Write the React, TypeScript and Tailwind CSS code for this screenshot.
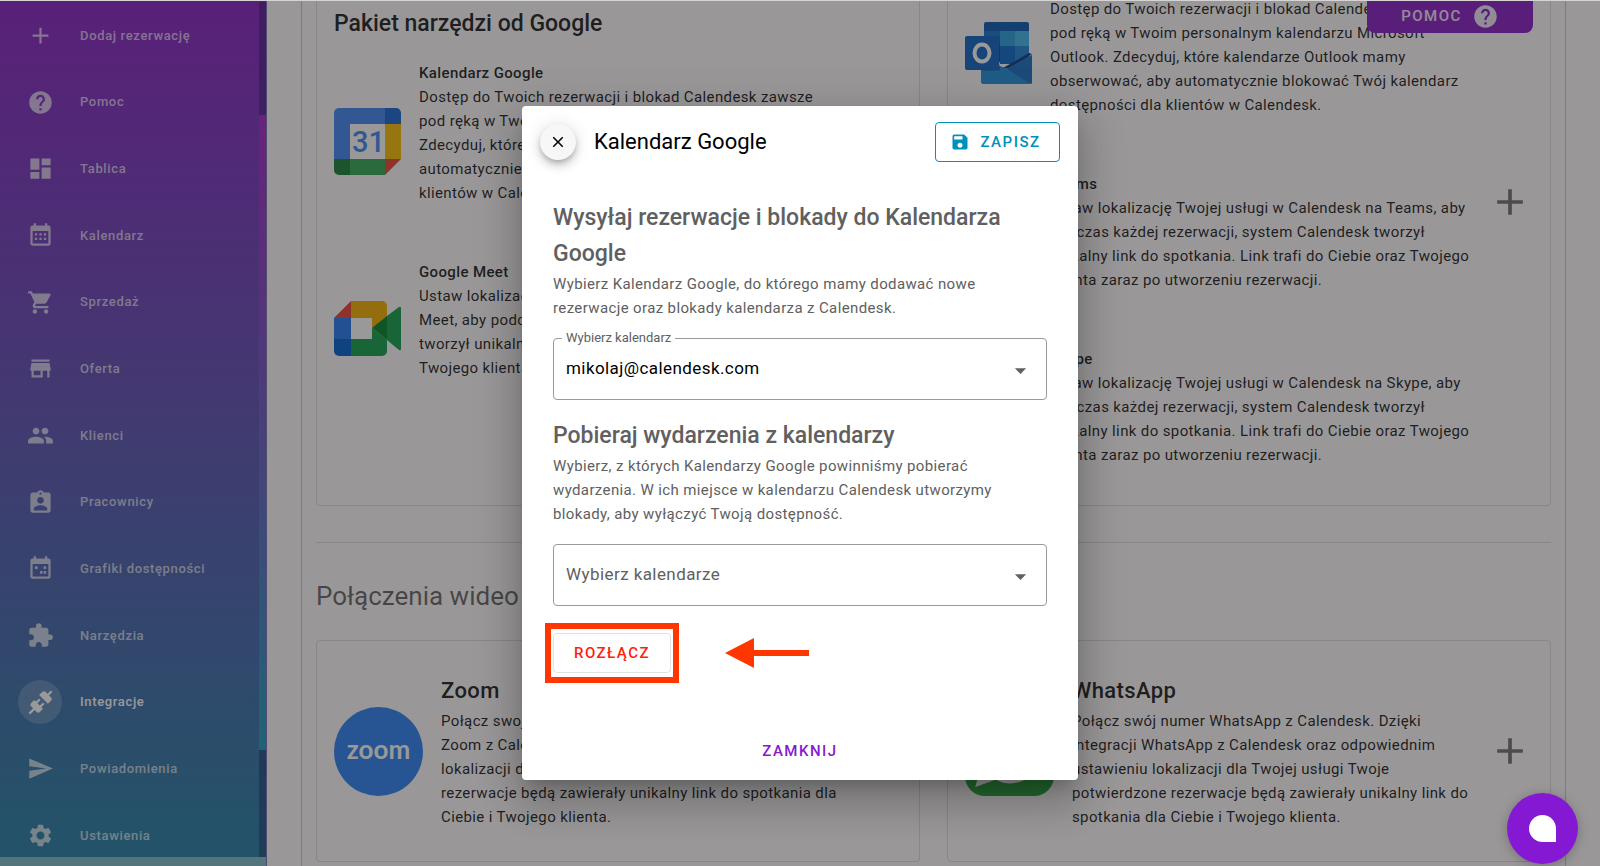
import type { ComponentType, ReactNode } from "react";
import {
  MdAdd,
  MdArrowDropDown,
  MdAssignmentInd,
  MdClose,
  MdDashboard,
  MdExtension,
  MdHelp,
  MdPeople,
  MdSave,
  MdSend,
  MdSettings,
  MdShoppingCart,
  MdStore,
} from "react-icons/md";

type IconProps = { className?: string };

function CalendarMonthIcon({ className }: IconProps) {
  return (
    <svg viewBox="0 0 24 24" className={className} fill="currentColor" aria-hidden="true">
      <path d="M9 10V12H7V10H9M13 10V12H11V10H13M17 10V12H15V10H17M19 3A2 2 0 0 1 21 5V19A2 2 0 0 1 19 21H5C3.89 21 3 20.1 3 19V5A2 2 0 0 1 5 3H6V1H8V3H16V1H18V3H19M19 19V8H5V19H19M9 14V16H7V14H9M13 14V16H11V14H13M17 14V16H15V14H17Z" />
    </svg>
  );
}

function ScheduleIcon({ className }: IconProps) {
  return (
    <svg viewBox="0 0 24 24" className={className} fill="currentColor" aria-hidden="true">
      <path d="M19 3A2 2 0 0 1 21 5V19A2 2 0 0 1 19 21H5C3.89 21 3 20.1 3 19V5A2 2 0 0 1 5 3H6V1H8V3H16V1H18V3H19M19 19V8H5V19H19M9.5 10V12.4H7V10H9.5M17 10V12.4H14.8V10H17M13.8 14.2V16.6H11.6V14.2H13.8M17 14.2V16.6H14.8V14.2H17Z" />
    </svg>
  );
}

function ConnectionIcon({ className }: IconProps) {
  return (
    <svg viewBox="0 0 24 24" className={className} fill="currentColor" aria-hidden="true">
      <path d="M21.4 7.5C22.2 8.3 22.2 9.6 21.4 10.3L18.6 13.1L10.8 5.3L13.6 2.5C14.4 1.7 15.7 1.7 16.4 2.5L18.2 4.3L21.2 1.3L22.6 2.7L19.6 5.7L21.4 7.5M15.6 13.3L14.2 11.9L11.4 14.7L9.3 12.6L12.1 9.8L10.7 8.4L7.9 11.2L6.4 9.8L3.6 12.6C2.8 13.4 2.8 14.7 3.6 15.4L5.4 17.2L1.4 21.2L2.8 22.6L6.8 18.6L8.6 20.4C9.4 21.2 10.7 21.2 11.4 20.4L14.2 17.6L12.8 16.2L15.6 13.3Z" />
    </svg>
  );
}

function GoogleCalendarLogo() {
  return (
    <svg viewBox="0 0 67 67" className="size-[67px]" aria-hidden="true">
      <path d="M5 0H51V16H16V51H0V5A5 5 0 0 1 5 0Z" fill="#4285f4" />
      <path d="M51 0H62A5 5 0 0 1 67 5V16H51Z" fill="#1967d2" />
      <path d="M51 16H67V51H51Z" fill="#fbbc04" />
      <path d="M16 51H51V67H16Z" fill="#34a853" />
      <path d="M0 51H16V67H5A5 5 0 0 1 0 62Z" fill="#188038" />
      <path d="M51 51H67L51 67Z" fill="#ea4335" />
      <path d="M16 16H51V51H16Z" fill="#fff" />
      <text x="34.5" y="44" textAnchor="middle" fontFamily="Roboto, sans-serif" fontWeight="500" fontSize="29" fill="#4285f4">
        31
      </text>
    </svg>
  );
}

function GoogleMeetLogo() {
  return (
    <svg viewBox="0 0 67 55" className="w-[67px]" aria-hidden="true">
      <path d="M0 17L17 0V17Z" fill="#ea4335" />
      <path d="M17 0H48A5 5 0 0 1 53 5V17L38 27V17H17Z" fill="#f5ae00" />
      <path d="M0 17H17V38H0Z" fill="#2678f0" />
      <path d="M0 38H17V55H5A5 5 0 0 1 0 50Z" fill="#0060d0" />
      <path d="M17 38H38V27L53 39V50A5 5 0 0 1 48 55H17Z" fill="#12a04a" />
      <path d="M17 17H38V38H17Z" fill="#fff" />
      <path d="M53 15L65 6Q67 5 67 7V48Q67 50 65 49L53 39Z" fill="#12a04a" />
      <path d="M38 27L53 15V39Z" fill="#00832d" />
    </svg>
  );
}

function OutlookLogo() {
  return (
    <svg viewBox="0 0 67 62" className="w-[67px]" aria-hidden="true">
      <path d="M21 0H62A2 2 0 0 1 64 2V40H19V2A2 2 0 0 1 21 0Z" fill="#0a5ab4" />
      <path d="M19 9H35V24H19Z" fill="#1473c8" />
      <path d="M35 9H50V24H35Z" fill="#28a0e0" />
      <path d="M50 9H64V24H50Z" fill="#44b8ea" />
      <path d="M35 24H50V42H35Z" fill="#0a68c8" />
      <path d="M50 24H64V40H50Z" fill="#1e86d4" />
      <path d="M64 31L67 32L45 47L38 46Z" fill="#0a3a88" />
      <path d="M16 36L42 47L67 33V59A3 3 0 0 1 64 62H19A3 3 0 0 1 16 59Z" fill="#1583d8" />
      <path d="M42 47L67 62V33Z" fill="#1a70c4" />
      <path d="M16 44L42 47L65 62H19A3 3 0 0 1 16 59Z" fill="#1f8fdc" />
      <path d="M16 14H32A3 3 0 0 1 35 17V49H16Z" fill="#000" opacity="0.18" />
      <rect x="0" y="14" width="34" height="34" rx="2" fill="#0f62c4" />
      <ellipse cx="17" cy="31" rx="7.5" ry="8.5" fill="none" stroke="#fff" strokeWidth="4" />
    </svg>
  );
}

function ZoomLogo() {
  return (
    <svg viewBox="0 0 89 89" className="w-[89px]" aria-hidden="true">
      <circle cx="44.5" cy="44.5" r="44.5" fill="#2d80f4" />
      <text x="44.5" y="52" textAnchor="middle" fontFamily="Lato, sans-serif" fontWeight="700" fontSize="26" fill="#fff">
        zoom
      </text>
    </svg>
  );
}

function WhatsAppLogo() {
  return (
    <svg viewBox="0 0 89 89" className="w-[89px]" aria-hidden="true">
      <rect width="89" height="89" rx="20" fill="#25a53c" />
      <path d="M14 76L19 58A30 30 0 1 1 31 70Z" fill="none" stroke="#fff" strokeWidth="5" />
    </svg>
  );
}

const navItems: { label: string; icon: ComponentType<IconProps>; active?: boolean }[] = [
  { label: "Dodaj rezerwację", icon: MdAdd },
  { label: "Pomoc", icon: MdHelp },
  { label: "Tablica", icon: MdDashboard },
  { label: "Kalendarz", icon: CalendarMonthIcon },
  { label: "Sprzedaż", icon: MdShoppingCart },
  { label: "Oferta", icon: MdStore },
  { label: "Klienci", icon: MdPeople },
  { label: "Pracownicy", icon: MdAssignmentInd },
  { label: "Grafiki dostępności", icon: ScheduleIcon },
  { label: "Narzędzia", icon: MdExtension },
  { label: "Integracje", icon: ConnectionIcon, active: true },
  { label: "Powiadomienia", icon: MdSend },
  { label: "Ustawienia", icon: MdSettings },
];

function Sidebar() {
  return (
    <aside className="relative flex w-[267px] shrink-0 border-r border-[#7a70b8] bg-linear-to-b/srgb from-[#8a20c4] via-[#5c52b4] to-[#2480a6] pt-[2px]">
      <nav className="-mb-[3px] flex flex-1 flex-col">
        {navItems.map(({ label, icon: Icon, active }) => (
          <a
            key={label}
            href="#"
            className={
              active
                ? "flex flex-1 items-center gap-[18px] pl-[18px] text-[13px] font-medium tracking-wider text-white"
                : "flex flex-1 items-center gap-[18px] pl-[18px] text-[13px] font-medium tracking-wider text-white/70"
            }
          >
            <span
              className={
                active
                  ? "flex size-11 items-center justify-center rounded-full bg-white/20"
                  : "flex size-11 items-center justify-center"
              }
            >
              <Icon className="size-[27px]" />
            </span>
            {label}
          </a>
        ))}
      </nav>
      <div className="flex w-[7px] flex-col bg-[#0a0a50]/35 pt-[113px] pb-[116px]">
        <div className="flex-1 bg-linear-to-b/srgb from-[#a822c8] via-[#6a5cc4] to-[#1f9cc0]" />
      </div>
      <div className="absolute inset-x-0 bottom-0 h-[9px] bg-[#80bcc8]" />
    </aside>
  );
}

type Integration = { title?: string; text: string; logo?: ReactNode; plus?: boolean };

const googleTools: Integration[] = [
  {
    title: "Kalendarz Google",
    logo: <GoogleCalendarLogo />,
    text: "Dostęp do Twoich rezerwacji i blokad Calendesk zawsze\npod ręką w Twoim kalendarzu Google.\nZdecyduj, które kalendarze Google mamy obserwować,\nautomatycznie blokując Twój kalendarz dostępności dla\nklientów w Calendesk.",
  },
  {
    title: "Google Meet",
    logo: <GoogleMeetLogo />,
    text: "Ustaw lokalizację Twojej usługi w Calendesk na Google\nMeet, aby podczas każdej rezerwacji, system Calendesk\ntworzył unikalny link do spotkania. Link trafi do\nTwojego klienta zaraz po utworzeniu rezerwacji.",
  },
];

const microsoftTools: Integration[] = [
  {
    logo: <OutlookLogo />,
    text: "Dostęp do Twoich rezerwacji i blokad Calendesk zawsze\npod ręką w Twoim personalnym kalendarzu Microsoft\nOutlook. Zdecyduj, które kalendarze Outlook mamy\nobserwować, aby automatycznie blokować Twój kalendarz\ndostępności dla klientów w Calendesk.",
  },
  {
    title: "Teams",
    plus: true,
    text: "Ustaw lokalizację Twojej usługi w Calendesk na Teams, aby\npodczas każdej rezerwacji, system Calendesk tworzył\nunikalny link do spotkania. Link trafi do Ciebie oraz Twojego\nklienta zaraz po utworzeniu rezerwacji.",
  },
  {
    title: "Skype",
    text: "Ustaw lokalizację Twojej usługi w Calendesk na Skype, aby\npodczas każdej rezerwacji, system Calendesk tworzył\nunikalny link do spotkania. Link trafi do Ciebie oraz Twojego\nklienta zaraz po utworzeniu rezerwacji.",
  },
];

function PlusButton() {
  return (
    <button type="button" aria-label="Dodaj" className="flex size-11 items-center justify-center text-black/55">
      <MdAdd className="size-11" />
    </button>
  );
}

function IntegrationRow({ title, text, logo, plus }: Integration) {
  return (
    <article className="flex items-center">
      <div className="mt-4 mr-[18px] w-[67px] shrink-0">{logo}</div>
      <div className="flex-1 text-[15px] leading-6 tracking-wide">
        {title ? <h3 className="font-medium">{title}</h3> : <div className="h-6" />}
        <p className="whitespace-pre-line">{text}</p>
      </div>
      {plus && (
        <div className="self-start pt-2">
          <PlusButton />
        </div>
      )}
    </article>
  );
}

function VideoCard({ title, text, logo, plus }: Integration) {
  return (
    <article className="flex items-center rounded border border-black/12 py-8 pr-[18px] pl-[17px]">
      <div className="mr-[18px] w-[89px] shrink-0">{logo}</div>
      <div className="flex-1 text-[15px] leading-6 tracking-wide">
        <h3 className="text-[22px] leading-9 font-medium">{title}</h3>
        <p className="whitespace-pre-line">{text}</p>
      </div>
      {plus && <PlusButton />}
    </article>
  );
}

function Integrations() {
  return (
    <main className="min-w-0 flex-1 overflow-hidden bg-[#fffbfe] px-[34px] text-black/90">
      <div className="border-x border-black/20 px-[14px] pb-20">
        <div className="-mt-10 grid grid-cols-2 gap-[27px]">
          <section className="rounded border border-black/12 pt-[45px] pr-[18px] pl-[17px]">
            <h2 className="mb-[19px] text-[23px] leading-9 font-medium">Pakiet narzędzi od Google</h2>
            <div className="flex flex-col gap-[55px]">
              {googleTools.map((item) => (
                <IntegrationRow key={item.title} {...item} />
              ))}
            </div>
          </section>
          <section className="flex flex-col gap-[55px] rounded border border-black/12 pt-3 pr-[18px] pb-[38px] pl-[17px]">
            {microsoftTools.map((item) => (
              <IntegrationRow key={item.text} {...item} />
            ))}
          </section>
        </div>
        <hr className="mt-9 border-black/12" />
        <h2 className="mt-[33px] mb-6 text-[26px] leading-10 text-black/60">Połączenia wideo</h2>
        <div className="grid grid-cols-2 gap-[27px]">
          <VideoCard
            title="Zoom"
            logo={<ZoomLogo />}
            text={
              "Połącz swoje konto Zoom z Calendesk. Dzięki integracji\nZoom z Calendesk oraz odpowiednim ustawieniu\nlokalizacji dla Twojej usługi Twoje potwierdzone\nrezerwacje będą zawierały unikalny link do spotkania dla\nCiebie i Twojego klienta."
            }
          />
          <VideoCard
            title="WhatsApp"
            logo={<WhatsAppLogo />}
            plus
            text={
              "Połącz swój numer WhatsApp z Calendesk. Dzięki\nintegracji WhatsApp z Calendesk oraz odpowiednim\nustawieniu lokalizacji dla Twojej usługi Twoje\npotwierdzone rezerwacje będą zawierały unikalny link do\nspotkania dla Ciebie i Twojego klienta."
            }
          />
        </div>
      </div>
    </main>
  );
}

function CalendarDialog() {
  return (
    <div
      role="dialog"
      aria-modal="true"
      aria-labelledby="dialog-title"
      className="w-[556px] rounded bg-white pb-[9px] shadow-[0_11px_15px_-7px_rgba(0,0,0,0.2),0_24px_38px_3px_rgba(0,0,0,0.14),0_9px_46px_8px_rgba(0,0,0,0.12)]"
    >
      <header className="flex h-[72px] items-center px-[18px]">
        <button
          type="button"
          aria-label="Zamknij okno"
          className="flex size-9 items-center justify-center rounded-full bg-[#f7f7f7] shadow-[0_3px_5px_-1px_rgba(0,0,0,0.2),0_6px_10px_0_rgba(0,0,0,0.14),0_1px_18px_0_rgba(0,0,0,0.12)]"
        >
          <MdClose className="size-[18px]" />
        </button>
        <h1 id="dialog-title" className="ml-[18px] flex-1 text-[22px] leading-8">
          Kalendarz Google
        </h1>
        <button
          type="button"
          className="flex h-10 w-[125px] items-center justify-center gap-[10px] rounded border border-[#0090bb] pr-1 text-[15px] font-medium tracking-widest text-[#0090bb]"
        >
          <MdSave className="size-5" />
          ZAPISZ
        </button>
      </header>

      <div className="px-[31px] pt-[22px] text-[#606060]">
        <h2 className="text-[23px] leading-9 font-medium">Wysyłaj rezerwacje i blokady do Kalendarza Google</h2>
        <p className="text-[15px] leading-6 tracking-wide">
          Wybierz Kalendarz Google, do którego mamy dodawać nowe rezerwacje oraz blokady kalendarza z Calendesk.
        </p>
        <div className="relative mt-[18px]">
          <label htmlFor="target" className="absolute -top-2 left-[9px] bg-white px-1 text-[13px] leading-4">
            Wybierz kalendarz
          </label>
          <select
            id="target"
            className="block h-[62px] w-full appearance-none rounded border border-[#9a9a9a] bg-transparent px-3 text-[17px] tracking-wide text-black"
          >
            <option>mikolaj@calendesk.com</option>
          </select>
          <MdArrowDropDown className="pointer-events-none absolute top-[19px] right-[13px] size-[27px]" />
        </div>

        <h2 className="mt-[18px] text-[23px] leading-9 font-medium">Pobieraj wydarzenia z kalendarzy</h2>
        <p className="text-[15px] leading-6 tracking-wide">
          Wybierz, z których Kalendarzy Google powinniśmy pobierać wydarzenia. W ich miejsce w kalendarzu Calendesk
          utworzymy blokady, aby wyłączyć Twoją dostępność.
        </p>
        <div className="relative mt-[18px]">
          <select
            aria-label="Wybierz kalendarze"
            className="block h-[62px] w-full appearance-none rounded border border-[#9a9a9a] bg-transparent px-3 text-[17px] tracking-wide"
          >
            <option>Wybierz kalendarze</option>
          </select>
          <MdArrowDropDown className="pointer-events-none absolute top-[19px] right-[13px] size-[27px]" />
        </div>

        <div className="mt-[27px] flex items-center gap-[54px]">
          <div className="relative">
            <button
              type="button"
              className="h-10 w-[118px] rounded border border-[#e2e2e2] text-[15px] font-medium tracking-widest text-[#ff1e0a]"
            >
              ROZŁĄCZ
            </button>
            <div className="pointer-events-none absolute -inset-x-2 -inset-y-[10px] border-6 border-[#ff3600]" />
          </div>
          <svg viewBox="0 0 84 30" className="w-[84px]" fill="#ff3600" aria-hidden="true">
            <path d="M0 15L29 0V12H84V18H29V30Z" />
          </svg>
        </div>
      </div>

      <footer className="mt-[58px] flex justify-center">
        <button type="button" className="h-10 px-4 text-[15px] font-medium tracking-widest text-[#8518d1]">
          ZAMKNIJ
        </button>
      </footer>
    </div>
  );
}

export default function App() {
  return (
    <div className="relative flex h-screen overflow-hidden font-[Roboto,sans-serif]">
      <Sidebar />
      <Integrations />
      <button
        type="button"
        className="absolute top-0 right-[67px] flex h-[33px] w-[166px] items-center justify-center gap-[10px] rounded-b-lg bg-[#8a1dc4] text-[15px] font-medium tracking-widest text-white/90"
      >
        POMOC
        <MdHelp className="size-[27px]" />
      </button>
      <div className="absolute inset-0 flex items-center justify-center bg-[#212121]/46 pt-5">
        <CalendarDialog />
      </div>
      <div className="absolute inset-x-0 top-0 h-px bg-[#d4d4d4]" />
      <button
        type="button"
        aria-label="Czat"
        className="absolute right-[22px] bottom-[2px] flex size-[71px] items-center justify-center rounded-full bg-[#8519d3] shadow-[0_2px_12px_rgba(0,0,0,0.25)]"
      >
        <span className="size-[27px] rounded-full rounded-br-xs bg-white" />
      </button>
    </div>
  );
}
